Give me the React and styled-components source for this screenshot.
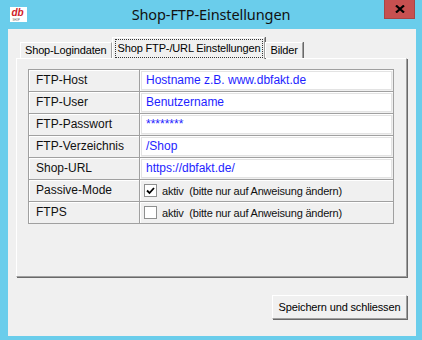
import React from 'react'
import styled, { createGlobalStyle } from 'styled-components'

// Daten der Tabelle
const rows = [
    { label: 'FTP-Host', value: 'Hostname z.B. www.dbfakt.de' },
    { label: 'FTP-User', value: 'Benutzername' },
    { label: 'FTP-Passwort', value: '********' },
    { label: 'FTP-Verzeichnis', value: '/Shop' },
    { label: 'Shop-URL', value: 'https://dbfakt.de/' },
    { label: 'Passive-Mode', check: true },
    { label: 'FTPS', check: false },
]

const tabs = [
    { title: 'Shop-Logindaten' },
    { title: 'Shop FTP-/URL Einstellungen', active: true },
    { title: 'Bilder' },
]

const GlobalStyle = createGlobalStyle`
    html, body {
        margin: 0;
        padding: 0;
        background: #6acdeb;
    }
    body {
        font-family: "Liberation Sans", Arial, sans-serif;
    }
`

const Window = styled.div`
    width: 422px;
    height: 340px;
    background: #6acdeb;
    display: flex;
    flex-direction: column;
    overflow: hidden;
`

const TitleBar = styled.div`
    height: 29px;
    display: grid;
    grid-template-columns: 1fr auto 1fr;
    align-items: start;
`

const Logo = styled.svg`
    margin: 7px 0 0 10px;
    display: block;
`

const Title = styled.div`
    font-family: "Noto Sans", "Open Sans", sans-serif;
    font-size: 14.5px;
    color: #111;
    line-height: 29px;
    letter-spacing: -0.1px;
`

const CloseButton = styled.div`
    justify-self: end;
    margin-right: 7px;
    width: 31px;
    height: 19px;
    background: #c75050;
    box-sizing: border-box;
    border: 1px solid #a84545;
    border-top: none;
    display: flex;
    align-items: center;
    justify-content: center;
`

const Client = styled.div`
    flex: 1;
    margin: 0 6px 4px 8px;
    background: #f0f0f0;
    padding: 8px 9px 0 8px;
    display: flex;
    flex-direction: column;
`

const TabStrip = styled.div`
    display: flex;
    align-items: flex-end;
    height: 22px;
    padding-left: 4px;
    margin-bottom: -1px;
    position: relative;
    z-index: 1;
`

const Tab = styled.div`
    box-sizing: border-box;
    height: ${p => (p.$active ? 22 : 16)}px;
    margin-bottom: ${p => (p.$active ? 0 : 1)}px;
    padding: ${p => (p.$active ? '1px 1px 0 2px' : '0 4px 0 4px')};
    background: #f0f0f0;
    border-top: 1px solid #fff;
    border-left: 1px solid #fff;
    border-right: 1px solid #a0a0a0;
    box-shadow: 1px 0 0 #696969;
    font-size: 11px;
    letter-spacing: -0.15px;
    color: #000;
    line-height: 15px;
    white-space: nowrap;
`

const FocusText = styled.span`
    display: inline-block;
    border: 1px dotted #333;
    padding: 1px 2px 1px 2px;
    line-height: 15px;
`

const Panel = styled.div`
    box-sizing: border-box;
    height: 219px;
    border-top: 1px solid #fff;
    border-left: 1px solid #fff;
    border-right: 1px solid #a0a0a0;
    border-bottom: 1px solid #a0a0a0;
    box-shadow: 1px 1px 0 #696969;
    padding: 10px 12px 0 11px;
`

const Grid = styled.div`
    display: grid;
    grid-template-columns: 110px 1fr;
    grid-auto-rows: 21px;
    gap: 1px;
    background: #a0a0a0;
    border: 1px solid #a0a0a0;
`

const LabelCell = styled.div`
    background: #f0f0f0;
    box-shadow: inset 1px 1px 0 #fff;
    padding-left: 7px;
    font-size: 12px;
    line-height: 21px;
    color: #111;
`

const ValueCell = styled.div`
    background: #f0f0f0;
    box-shadow: inset 1px 1px 0 #fff;
    padding: 1px;
    display: flex;
    align-items: center;
`

const Input = styled.div`
    flex: 1;
    align-self: stretch;
    background: #fff;
    border: 1px solid #e3e3e3;
    padding-left: 4px;
    font-size: 12px;
    line-height: 17px;
    color: #1e1eff;
`

const CheckRow = styled.div`
    display: flex;
    align-items: center;
    padding-left: 3px;
    font-size: 11px;
    color: #111;
    letter-spacing: -0.2px;
    white-space: pre;
`

const Box = styled.span`
    box-sizing: border-box;
    width: 13px;
    height: 13px;
    background: #fff;
    border: 1px solid #8e8f8f;
    margin-right: 5px;
    display: flex;
    align-items: center;
    justify-content: center;
`

const Footer = styled.div`
    display: flex;
    justify-content: flex-end;
    padding-top: 18px;
`

const Button = styled.div`
    box-sizing: border-box;
    width: 135px;
    height: 24px;
    background: #f0f0f0;
    border-top: 1px solid #fff;
    border-left: 1px solid #fff;
    border-right: 1px solid #a0a0a0;
    border-bottom: 1px solid #a0a0a0;
    box-shadow: 1px 1px 0 #696969;
    font-size: 11px;
    letter-spacing: -0.15px;
    line-height: 22px;
    text-align: center;
    color: #000;
`

const CheckMark = () => (
    <svg width="9" height="8" viewBox="0 0 9 8">
        <path d="M1 3.5 L3.5 6 L8 1" fill="none" stroke="#000" strokeWidth="1.8" />
    </svg>
)

const App = () => {
    return (
        <Window>
            <GlobalStyle />
            <TitleBar>
                <Logo width="17" height="15" viewBox="0 0 17 15">
                    <rect width="17" height="15" fill="#fff" />
                    <text x="1.5" y="8.5" fontFamily="Liberation Sans, Arial, sans-serif" fontSize="10" fontWeight="bold" fontStyle="italic" fill="#d0202a">db</text>
                    <text x="2.5" y="14" fontFamily="Liberation Sans, Arial, sans-serif" fontSize="2.6" fill="#555">SHOP</text>
                </Logo>
                <Title>Shop-FTP-Einstellungen</Title>
                <CloseButton>
                    <svg width="10" height="8" viewBox="0 0 10 8">
                        <path d="M1 0.5 L9 7.5 M9 0.5 L1 7.5" stroke="#000" strokeWidth="2.2" />
                    </svg>
                </CloseButton>
            </TitleBar>
            <Client>
                <TabStrip>
                    {tabs.map((t, i) => (
                        <Tab key={i} $active={t.active}>
                            {t.active ? <FocusText>{t.title}</FocusText> : t.title}
                        </Tab>
                    ))}
                </TabStrip>
                <Panel>
                    <Grid>
                        {rows.map((r, i) => (
                            <React.Fragment key={i}>
                                <LabelCell>{r.label}</LabelCell>
                                <ValueCell>
                                    {r.check === undefined ? (
                                        <Input>{r.value}</Input>
                                    ) : (
                                        <CheckRow>
                                            <Box>{r.check && <CheckMark />}</Box>
                                            {'aktiv  (bitte nur auf Anweisung ändern)'}
                                        </CheckRow>
                                    )}
                                </ValueCell>
                            </React.Fragment>
                        ))}
                    </Grid>
                </Panel>
                <Footer>
                    <Button>Speichern und schliessen</Button>
                </Footer>
            </Client>
        </Window>
    )
}

export default App
